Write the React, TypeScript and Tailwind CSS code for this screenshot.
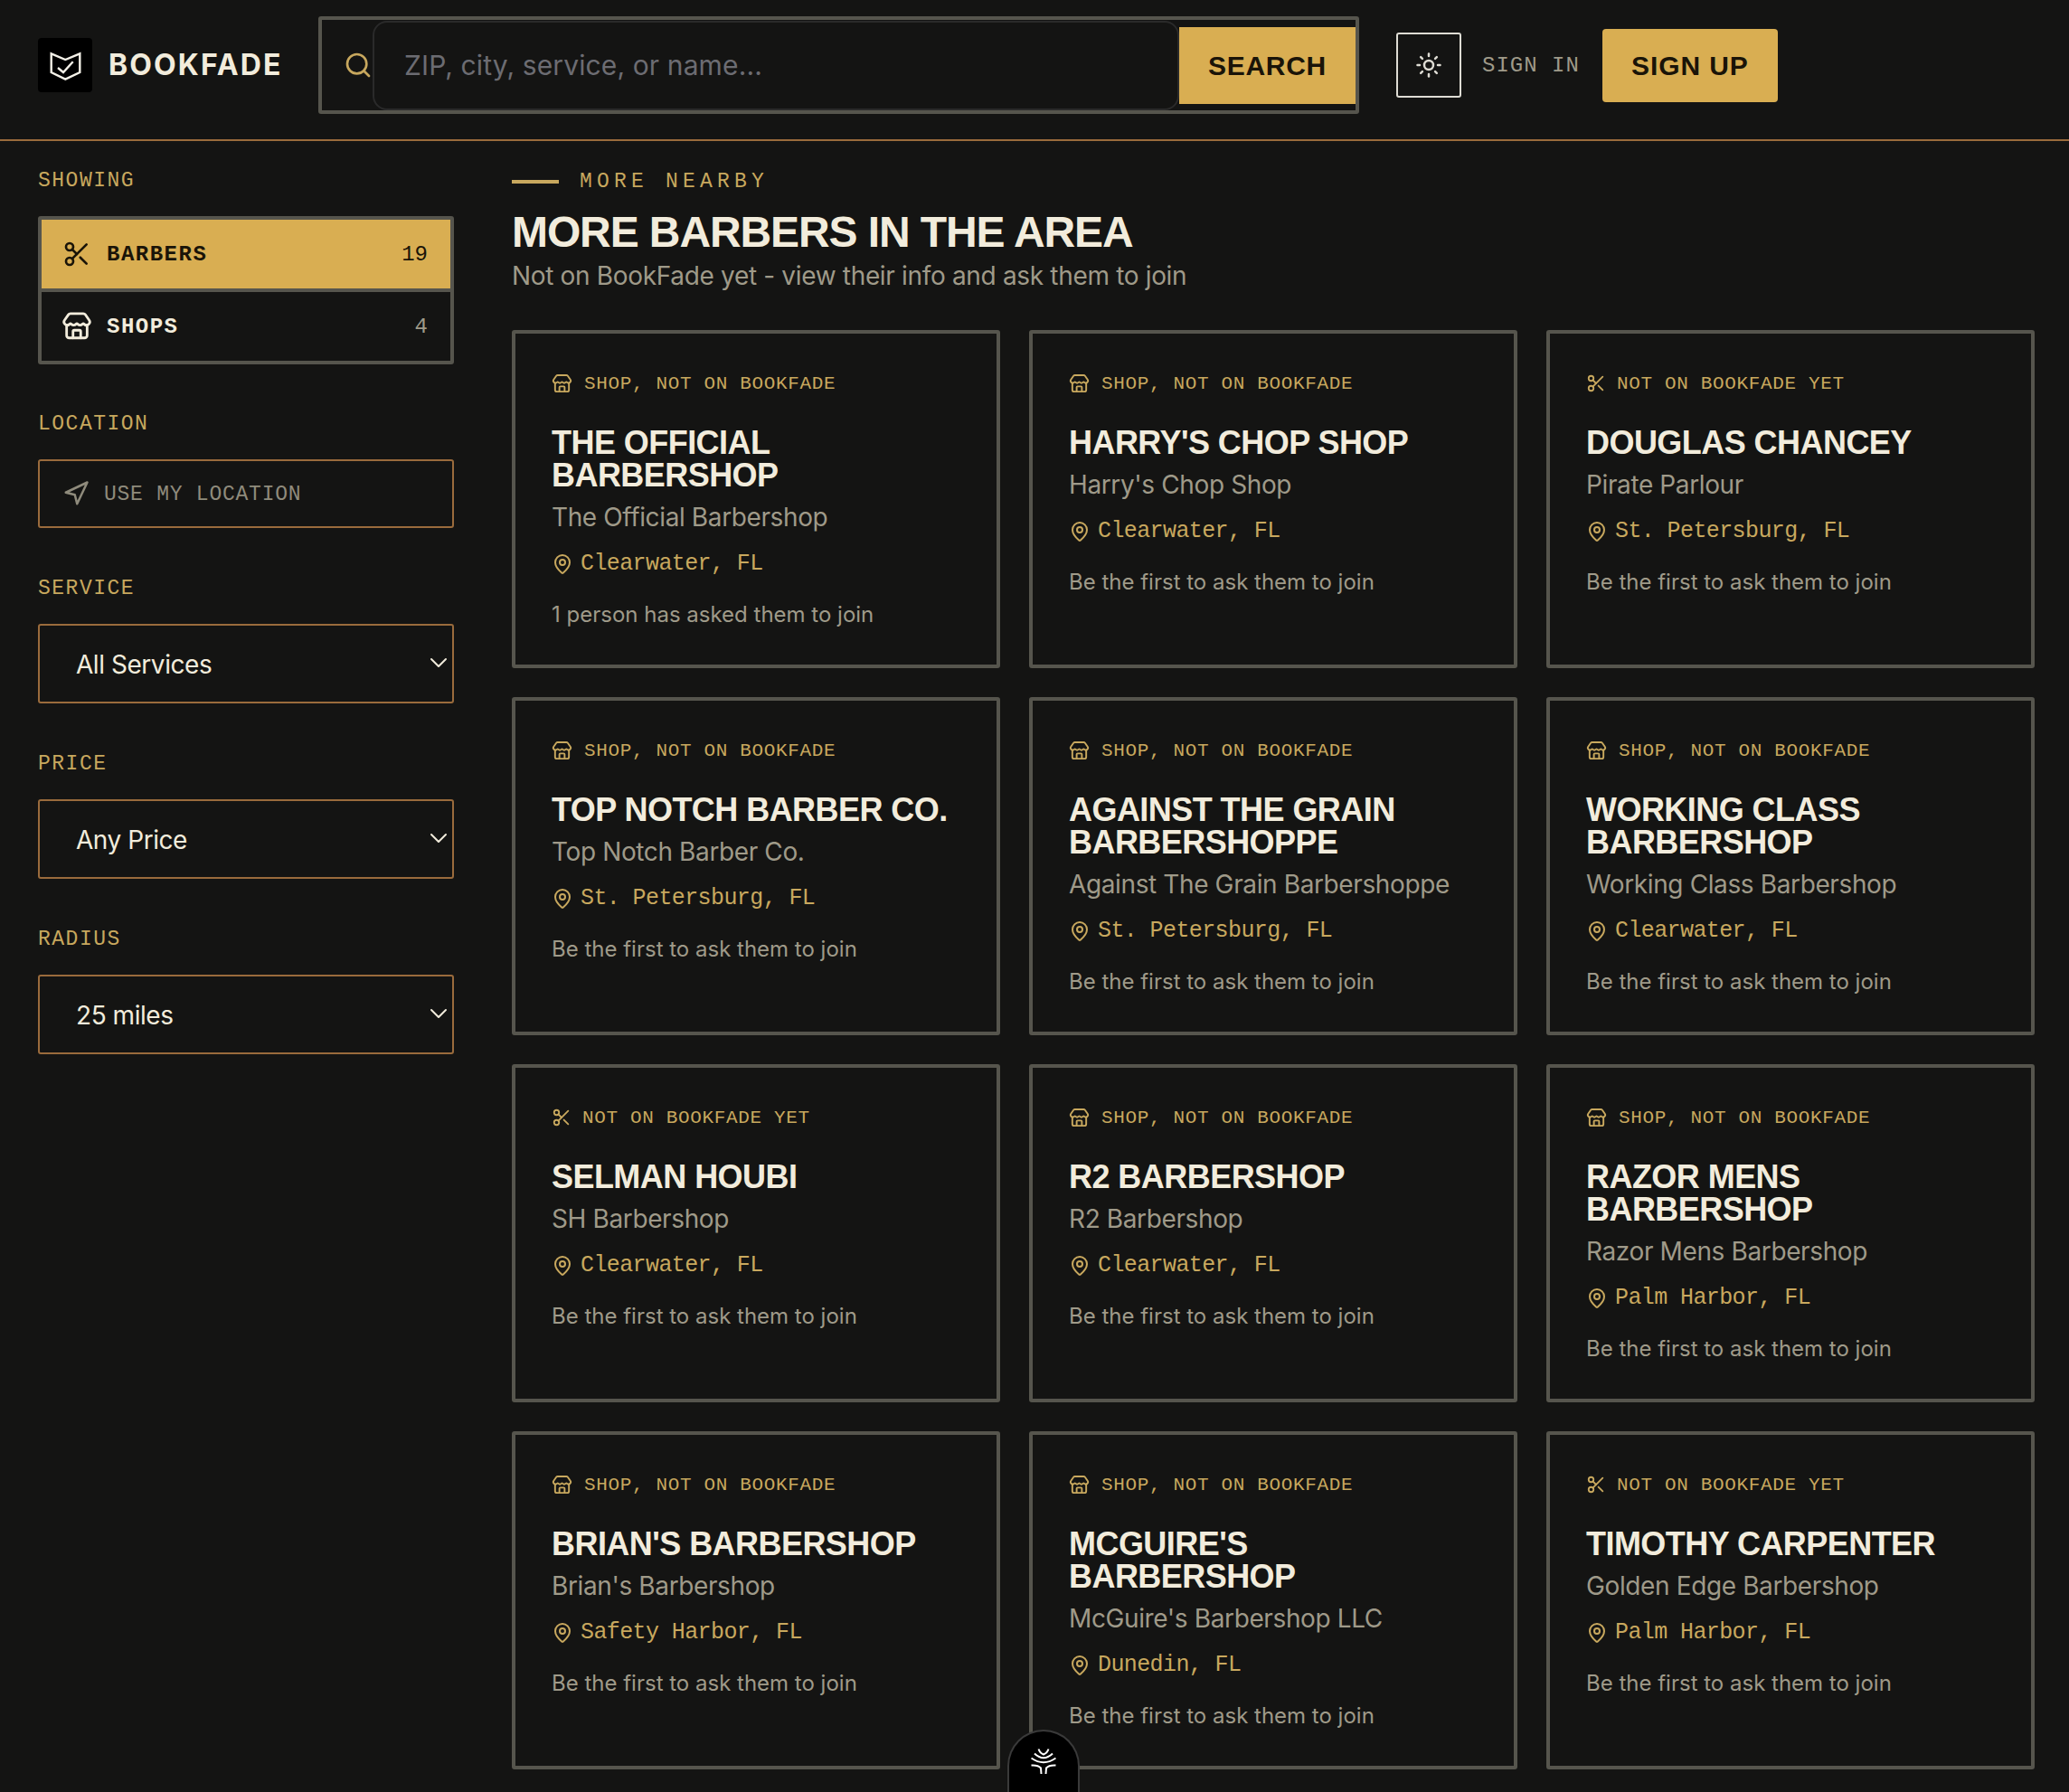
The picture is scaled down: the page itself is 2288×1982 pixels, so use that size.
import React from 'react';
import { ChevronDown, MapPin, Navigation, Scissors, Search, Store, Sun } from 'lucide-react';

const mono = "font-['Liberation_Mono',monospace]";
const heading = "font-['Liberation_Sans',sans-serif]";

type Listing = {
  kind: 'shop' | 'barber';
  name: string;
  sub: string;
  city: string;
  note?: string;
};

const DEFAULT_NOTE = 'Be the first to ask them to join';

const listings: Listing[] = [
  { kind: 'shop', name: 'The Official Barbershop', sub: 'The Official Barbershop', city: 'Clearwater, FL', note: '1 person has asked them to join' },
  { kind: 'shop', name: "Harry's Chop Shop", sub: "Harry's Chop Shop", city: 'Clearwater, FL' },
  { kind: 'barber', name: 'Douglas Chancey', sub: 'Pirate Parlour', city: 'St. Petersburg, FL' },
  { kind: 'shop', name: 'Top Notch Barber Co.', sub: 'Top Notch Barber Co.', city: 'St. Petersburg, FL' },
  { kind: 'shop', name: 'Against The Grain Barbershoppe', sub: 'Against The Grain Barbershoppe', city: 'St. Petersburg, FL' },
  { kind: 'shop', name: 'Working Class Barbershop', sub: 'Working Class Barbershop', city: 'Clearwater, FL' },
  { kind: 'barber', name: 'Selman Houbi', sub: 'SH Barbershop', city: 'Clearwater, FL' },
  { kind: 'shop', name: 'R2 Barbershop', sub: 'R2 Barbershop', city: 'Clearwater, FL' },
  { kind: 'shop', name: 'Razor Mens Barbershop', sub: 'Razor Mens Barbershop', city: 'Palm Harbor, FL' },
  { kind: 'shop', name: "Brian's Barbershop", sub: "Brian's Barbershop", city: 'Safety Harbor, FL' },
  { kind: 'shop', name: "McGuire's Barbershop", sub: "McGuire's Barbershop LLC", city: 'Dunedin, FL' },
  { kind: 'barber', name: 'Timothy Carpenter', sub: 'Golden Edge Barbershop', city: 'Palm Harbor, FL' },
];

const Label: React.FC<{ children: React.ReactNode; className?: string }> = ({ children, className }) => (
  <div className={`${mono} h-[30px] text-[23px] leading-[34px] tracking-[1.5px] text-[#c8a85e] ${className ?? ''}`}>{children}</div>
);

const FilterSelect: React.FC<{ label: string; value: string }> = ({ label, value }) => (
  <div className="mt-[50px]">
    <Label>{label}</Label>
    <div className="relative mt-[26px] h-[88px]">
      <select
        defaultValue={value}
        className="h-full w-full appearance-none rounded-[3px] border-2 border-[#9a6b3c] bg-transparent pl-[40px] pt-[2px] text-[28px] tracking-[-0.45px] text-[#f2ecdc] outline-none"
      >
        <option value={value}>{value}</option>
      </select>
      <ChevronDown className="pointer-events-none absolute right-[1px] top-[27px] h-[32px] w-[32px] text-[#f2ecdc]" strokeWidth={1.5} />
    </div>
  </div>
);

const Card: React.FC<{ item: Listing }> = ({ item }) => {
  const isShop = item.kind === 'shop';
  return (
    <div className="h-[374px] rounded-[3px] border-4 border-[#56554d] p-10">
      <div className={`${mono} flex h-[30px] items-center text-[21px] tracking-[0.65px] text-[#c8a85e] ${isShop ? 'gap-[13px]' : 'gap-[12px]'}`}>
        {isShop ? <Store className="h-[23px] w-[23px]" strokeWidth={2} /> : <Scissors className="h-[22px] w-[22px]" strokeWidth={2} />}
        <span className="mt-[2px]">{isShop ? 'SHOP, NOT ON BOOKFADE' : 'NOT ON BOOKFADE YET'}</span>
      </div>
      <h3 className={`${heading} mt-[33px] text-[36px] font-bold uppercase leading-[36px] tracking-[-0.55px] text-[#f2ecdc]`}>{item.name}</h3>
      <p className="mt-[7px] text-[28px] leading-[42px] tracking-[-0.38px] text-[#9f9a89]">{item.sub}</p>
      <div className={`${mono} mt-[13px] flex h-[36px] items-center gap-[8px] text-[25px] tracking-[-0.6px] text-[#c8a85e]`}>
        <MapPin className="h-[24px] w-[24px]" strokeWidth={2} />
        <span>{item.city}</span>
      </div>
      <p className="mt-[20px] text-[24px] leading-[36px] text-[#9f9a89]">{item.note ?? DEFAULT_NOTE}</p>
    </div>
  );
};

export default function App() {
  return (
    <div className="relative h-[1982px] overflow-hidden bg-[#141413] font-['Inter',sans-serif]">
      <header className="flex h-[156px] items-center border-b-2 border-[#9a6b3c] px-[42px] pb-[10px]">
        <div className="h-[60px] w-[60px] rounded-[4px] bg-black">
          <svg viewBox="0 0 60 60" className="h-[60px] w-[60px]" fill="none" stroke="#f4f1e8" strokeWidth="2.4">
            <path d="M14.7 17.3L30.3 24l16-6.7V38l-16 7.7L14.7 38z" />
            <path d="M22 33l6 5 10.7-11.7" />
          </svg>
        </div>
        <span className="ml-[18px] w-[190px] text-[32px] font-bold tracking-[2.1px] text-[#f2ecdc]">BOOKFADE</span>

        <div className="ml-[42px] flex h-[108px] w-[1151px] items-center rounded-[3px] border-4 border-[#56554d]">
          <Search className="ml-[24px] h-[32px] w-[32px] shrink-0 text-[#c8a85e]" strokeWidth={2} />
          <div className="flex h-[99px] flex-1 items-center rounded-[16px] border-2 border-[#2a2a2a] pl-[33px] text-[30px] tracking-[0.12px] text-[#6c6c72]">
            ZIP, city, service, or name...
          </div>
          <button className={`${heading} flex h-[85px] w-[195px] items-center justify-center bg-[#d9ae52] text-[30px] font-bold tracking-[0.7px] text-[#1a1408]`}>SEARCH</button>
        </div>

        <button className="ml-[41px] flex h-[72px] w-[72px] items-center justify-center rounded-[3px] border-2 border-[#dedcd4]">
          <Sun className="h-[30px] w-[30px] text-[#dedcd4]" strokeWidth={2} />
        </button>
        <span className={`${mono} ml-[23px] mt-[2px] text-[24px] tracking-[1px] text-[#9f9a89]`}>SIGN IN</span>
        <button className={`${heading} ml-[25px] flex h-[81px] w-[194px] items-center justify-center rounded-[4px] bg-[#d9ae52] text-[30px] font-bold tracking-[0.9px] text-[#1a1408]`}>SIGN UP</button>
      </header>

      <div className="flex pl-[42px] pr-[38px]">
        <aside className="w-[460px] shrink-0 pt-[27px]">
          <Label>SHOWING</Label>
          <div className="mt-[26px] rounded-[3px] border-4 border-[#56554d]">
            <div className={`${mono} flex h-[76px] items-center bg-[#d9ae52] pl-[23px] pr-[25px] text-[24px] text-[#1a1408]`}>
              <Scissors className="h-[32px] w-[32px]" strokeWidth={2} />
              <span className="ml-[17px] mt-[2px] font-bold tracking-[1.5px]">BARBERS</span>
              <span className="ml-auto mt-[2px]">19</span>
            </div>
            <div className="h-[4px] bg-[#56554d]" />
            <div className={`${mono} flex h-[76px] items-center pl-[22px] pr-[25px] text-[24px] text-[#f2ecdc]`}>
              <Store className="h-[34px] w-[34px]" strokeWidth={2} />
              <span className="ml-[16px] mt-[2px] font-bold tracking-[1.5px]">SHOPS</span>
              <span className="ml-auto mt-[2px] text-[#9f9a89]">4</span>
            </div>
          </div>

          <Label className="mt-[49px]">LOCATION</Label>
          <div className={`${mono} mt-[26px] flex h-[76px] items-center gap-[16px] rounded-[3px] border-2 border-[#9a6b3c] pl-[25px] text-[23px] tracking-[0.75px] text-[#8f8b7c]`}>
            <Navigation className="h-[30px] w-[30px]" strokeWidth={2} />
            <span className="mt-[2px]">USE MY LOCATION</span>
          </div>

          <FilterSelect label="SERVICE" value="All Services" />
          <FilterSelect label="PRICE" value="Any Price" />
          <FilterSelect label="RADIUS" value="25 miles" />
        </aside>

        <main className="ml-[64px] flex-1 pt-[30px]">
          <div className="flex h-[30px] items-center">
            <span className="h-[4px] w-[52px] bg-[#c8a85e]" />
            <span className={`${mono} ml-[23px] text-[23px] tracking-[5.2px] text-[#c8a85e]`}>MORE NEARBY</span>
          </div>
          <h1 className={`${heading} mt-[17px] text-[48px] font-bold leading-[48px] tracking-[-1.1px] text-[#f2ecdc]`}>MORE BARBERS IN THE AREA</h1>
          <p className="mt-[3px] text-[28px] leading-[42px] tracking-[-0.33px] text-[#9f9a89]">Not on BookFade yet - view their info and ask them to join</p>
          <div className="mt-[39px] grid grid-cols-3 gap-[32px]">
            {listings.map((item) => (
              <Card key={item.name} item={item} />
            ))}
          </div>
        </main>
      </div>

      {/* floating badge bottom centre */}
      <div className="absolute bottom-0 left-[1114px] flex h-[69px] w-[80px] justify-center rounded-t-[40px] border-2 border-b-0 border-[#3a3a3a] bg-black pt-[19px]">
        <svg viewBox="0 0 28 28" className="h-[28px] w-[28px]" fill="none" stroke="#fff" strokeWidth="2">
          <path d="M8.5 0.5Q10 5 14 6.5Q18 5 19.5 0.5" />
          <path d="M4 5.5Q14 15 24 5.5" />
          <path d="M0.5 10.5Q14 20 27.5 10.5" />
          <path d="M0.5 18.5Q8 18 11 21.5L11.5 28" />
          <path d="M27.5 18.5Q20 18 17 21.5L16.5 28" />
        </svg>
      </div>
    </div>
  );
}
